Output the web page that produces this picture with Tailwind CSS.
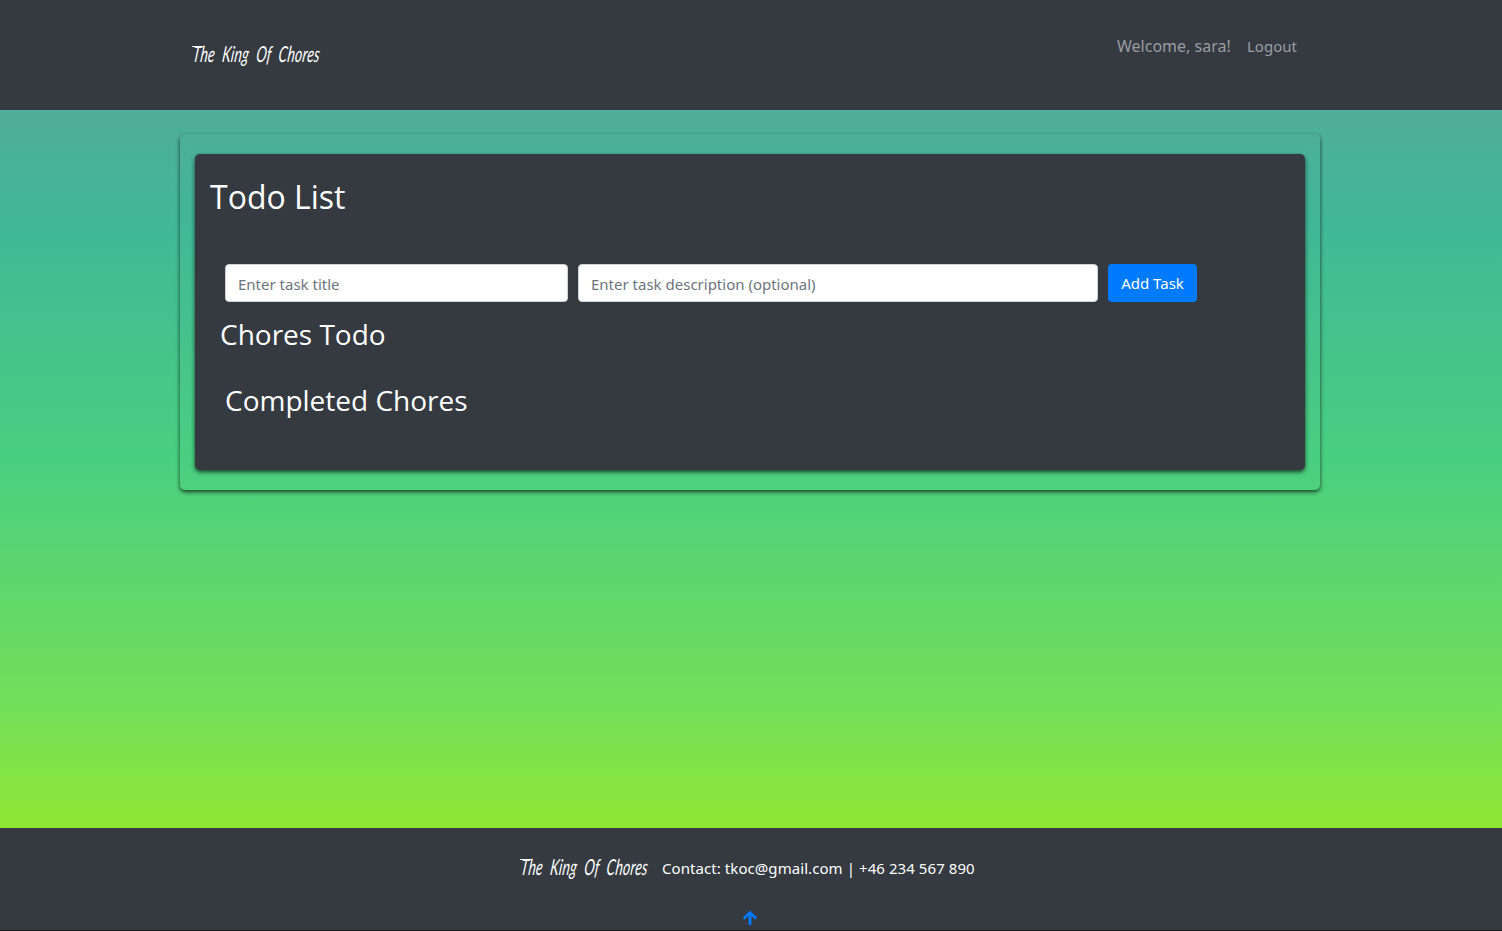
<!DOCTYPE html>
<html lang="en">
<head>
<meta charset="utf-8">
<title>The King Of Chores</title>
<script src="https://cdn.jsdelivr.net/npm/@tailwindcss/browser@4"></script>
</head>
<body class="flex h-screen flex-col overflow-hidden bg-[linear-gradient(180deg,#50ad9a_110px,#41b797_220px,#49cf80_460px,#74df58_710px,#8fe734_828px)] font-['Noto_Sans',sans-serif] text-base text-white">
<header class="h-[110px] bg-[#343a40]">
  <div class="mx-auto flex w-[1110px] items-start justify-between pt-[34px]">
    <a class="relative block h-10 w-[130px] -translate-x-[3px]"><span class="absolute top-3 -left-px h-px w-3 bg-white"></span><span class="inline-block origin-left scale-x-[.63] -skew-x-12 whitespace-nowrap font-['Lato',sans-serif] text-[22px] leading-10 tracking-[0.4px] italic [word-spacing:6px]">The King Of Chores</span></a>
    <nav class="flex gap-4 pr-2 text-[#9a9da0]">
      <span class="w-[114px] whitespace-nowrap">Welcome, sara!</span>
      <a class="w-[51px] text-[15px] leading-6">Logout</a>
    </nav>
  </div>
</header>
<main class="flex-1 pt-6">
  <section class="mx-auto h-[356px] w-[1140px] -translate-x-px rounded-[5px] px-[15px] py-5 shadow-[0_2px_4px_rgba(0,0,0,.7)]">
    <div class="h-[316px] rounded-[5px] bg-[#343a40] px-[15px] pt-6 shadow-[0_2px_4px_rgba(0,0,0,.7)]">
      <h1 class="font-['Open_Sans'] text-[32px] leading-[38px]">Todo List</h1>
      <form class="mt-12 flex gap-2.5 pl-[15px]">
        <input class="h-[38px] w-[343px] rounded border border-[#ced4da] bg-white px-3 pt-0.5 text-[15px] placeholder:text-[#6c757d]" placeholder="Enter task title">
        <input class="h-[38px] w-[520px] rounded border border-[#ced4da] bg-white px-3 pt-0.5 text-[15px] placeholder:text-[#6c757d]" placeholder="Enter task description (optional)">
        <button type="button" class="h-[38px] w-[89px] rounded bg-[#007bff] text-[15px] whitespace-nowrap">Add Task</button>
      </form>
      <h2 class="mt-[15px] pl-2.5 font-['Open_Sans'] text-[28px] leading-[34px]">Chores Todo</h2>
      <h2 class="mt-8 pl-[15px] font-['Open_Sans'] text-[28px] leading-[34px]">Completed Chores</h2>
    </div>
  </section>
</main>
<footer class="flex h-[103px] flex-col items-center border-b border-[#1b1b1b] bg-[#343a40] pt-5">
  <div class="flex h-10 w-[454px] items-center">
    <span class="relative block w-[138px] -translate-x-[3px] -translate-y-px"><span class="absolute top-3 -left-px h-px w-3 bg-white"></span><span class="inline-block origin-left scale-x-[.63] -skew-x-12 whitespace-nowrap font-['Lato',sans-serif] text-[22px] leading-10 tracking-[0.4px] italic [word-spacing:6px]">The King Of Chores</span></span>
    <span class="text-[15px] tracking-[0.07px] whitespace-nowrap">Contact: tkoc@gmail.com | +46 234 567 890</span>
  </div>
  <a class="mt-[22px] -translate-x-px text-[#007bff]"><svg class="h-4 w-3.5" viewBox="0 0 448 512" fill="currentColor" stroke="currentColor" stroke-width="12"><path d="M34.9 289.5l-22.2-22.2c-9.4-9.4-9.4-24.6 0-33.9L207 39c9.4-9.4 24.6-9.4 33.9 0l194.3 194.3c9.4 9.4 9.4 24.6 0 33.9L413 289.4c-9.5 9.5-25 9.3-34.3-.4L264 168.6V456c0 13.3-10.7 24-24 24h-32c-13.3 0-24-10.7-24-24V168.6L69.2 289.1c-9.3 9.8-24.8 10-34.3.4z"/></svg></a>
</footer>
</body>
</html>
